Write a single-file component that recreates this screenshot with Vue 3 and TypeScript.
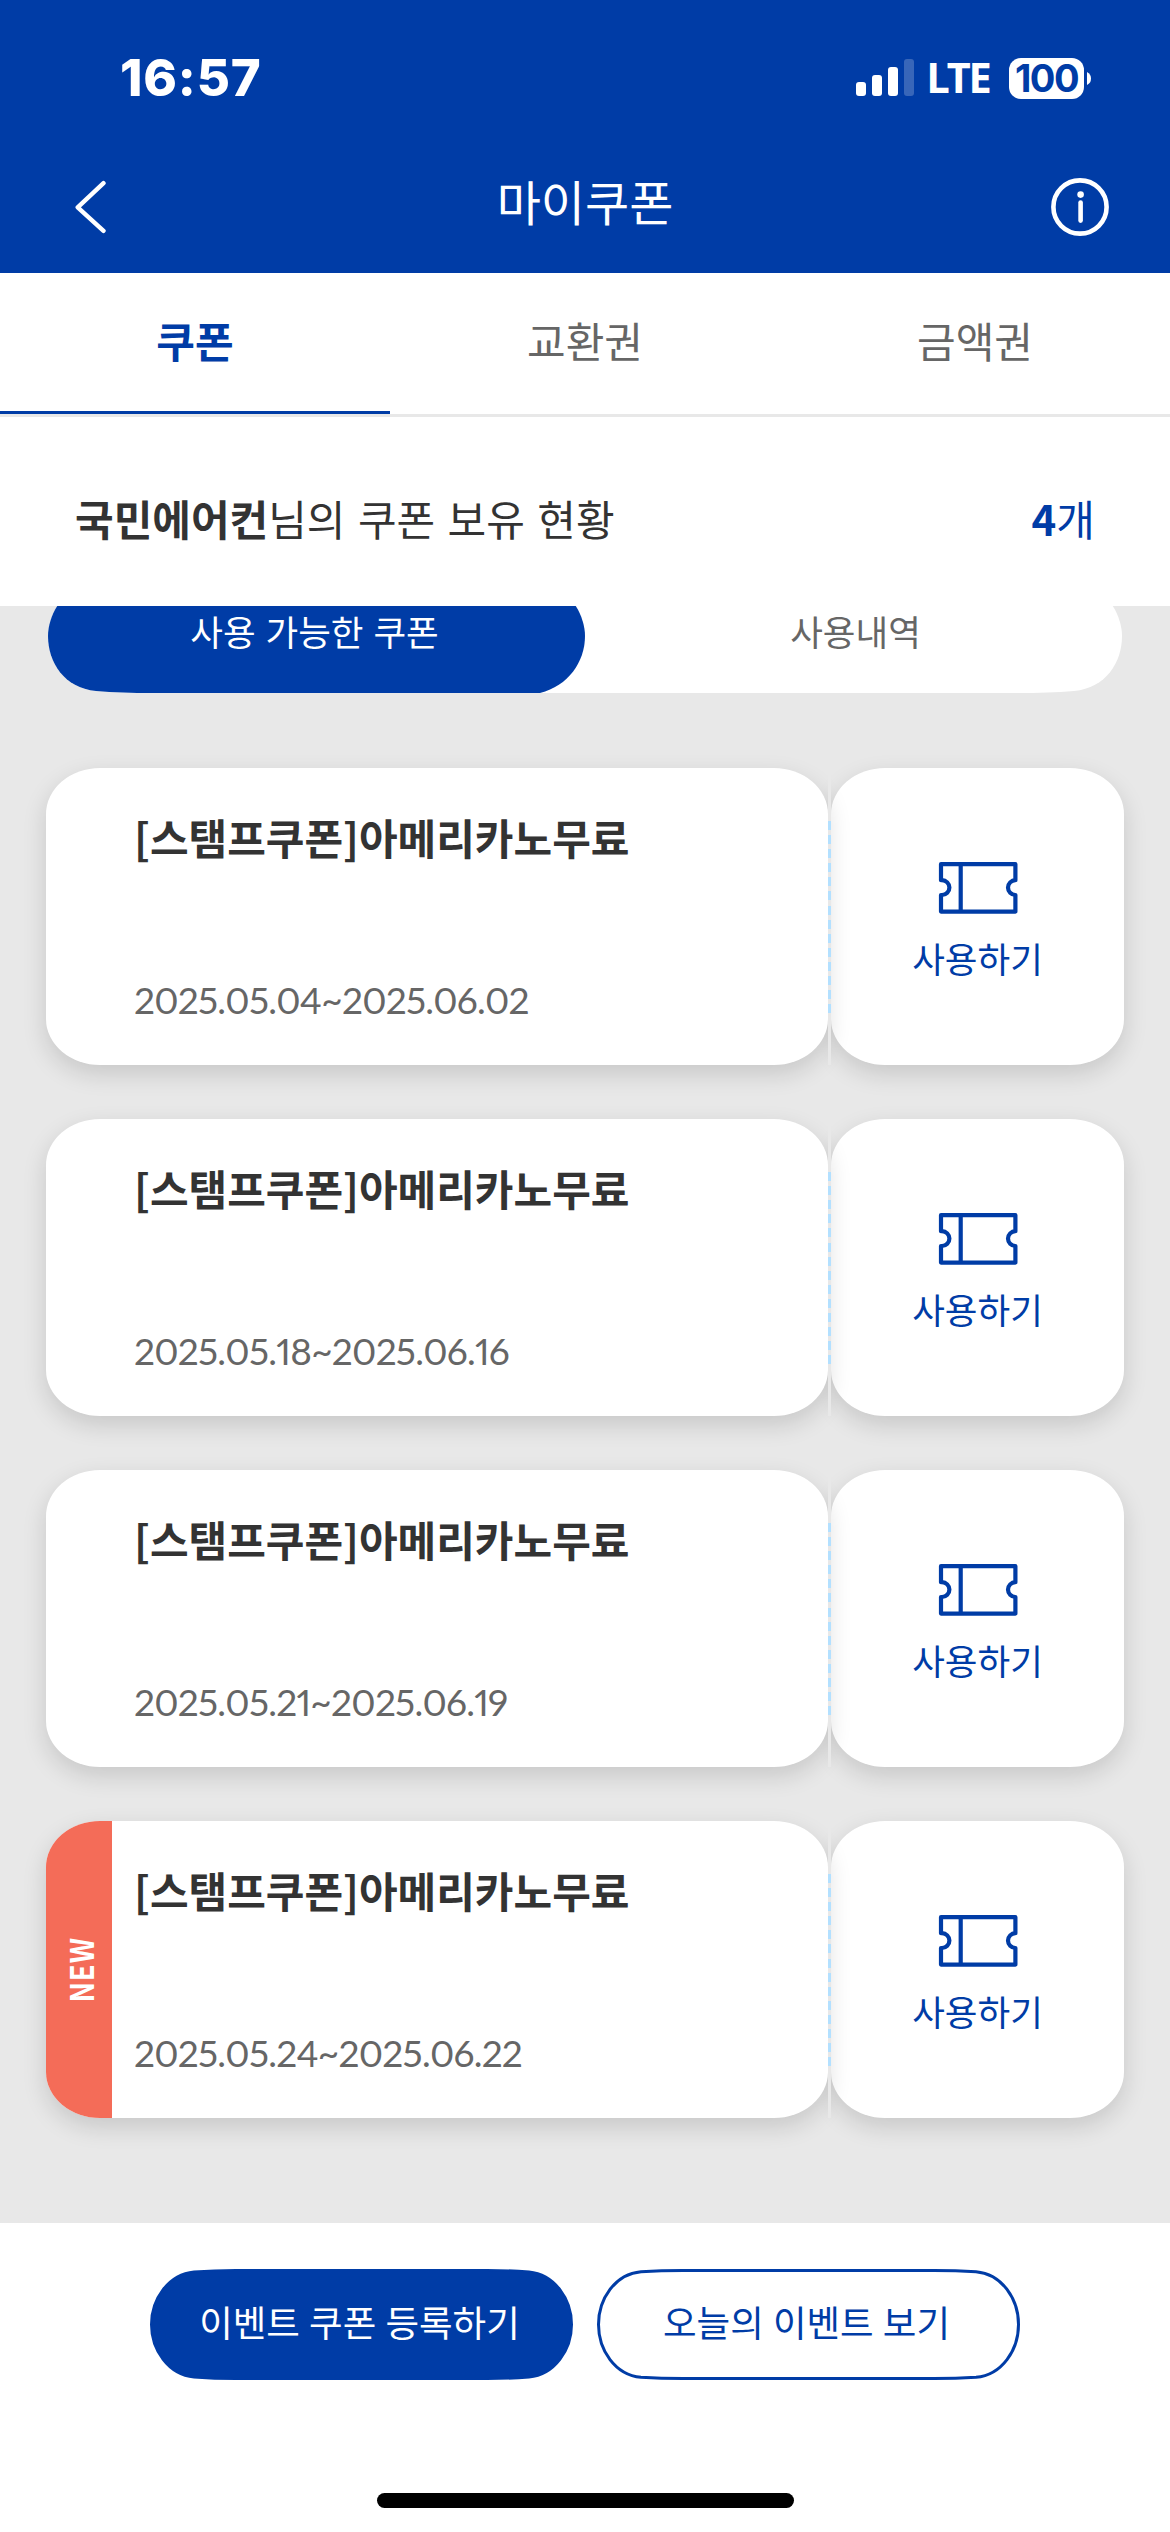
<script setup lang="ts">
interface Coupon {
  title: string
  period: string
  isNew: boolean
}

const tabs = ['쿠폰', '교환권', '금액권']
const activeTab = '쿠폰'

const coupons: Coupon[] = [
  { title: '[스탬프쿠폰]아메리카노무료', period: '2025.05.04~2025.06.02', isNew: false },
  { title: '[스탬프쿠폰]아메리카노무료', period: '2025.05.18~2025.06.16', isNew: false },
  { title: '[스탬프쿠폰]아메리카노무료', period: '2025.05.21~2025.06.19', isNew: false },
  { title: '[스탬프쿠폰]아메리카노무료', period: '2025.05.24~2025.06.22', isNew: true },
]
</script>

<template>
  <div class="screen">
    <header class="top">
      <div class="status">
        <span class="clock">16:57</span>
        <div class="status-right">
          <svg class="signal" width="58" height="38" viewBox="0 0 58 38" fill="#fff">
            <rect x="0" y="23" width="10" height="14" rx="3" />
            <rect x="16" y="16" width="10" height="21" rx="3" />
            <rect x="32" y="8" width="10" height="29" rx="3" />
            <rect x="48" y="0" width="10" height="37" rx="3" opacity="0.22" />
          </svg>
          <span class="lte">LTE</span>
          <span class="battery">100</span>
          <svg class="nub" width="4" height="13" viewBox="0 0 4 13"><path d="M0 0Q4 2 4 6.5T0 13Z" fill="#fff" /></svg>
        </div>
      </div>
      <div class="nav">
        <svg class="back" width="33" height="54" viewBox="0 0 33 54" fill="none" stroke="#fff" stroke-width="4.4" stroke-linecap="round" stroke-linejoin="round">
          <path d="M28.5 3.2L2.7 27.3L28.5 50.8" />
        </svg>
        <h1>마이쿠폰</h1>
        <svg class="info" width="58" height="58" viewBox="0 0 58 58" fill="none">
          <circle cx="29" cy="29" r="26.6" stroke="#fff" stroke-width="4.6" />
          <circle cx="29.6" cy="16.6" r="3.3" fill="#fff" />
          <path d="M29.6 24.6V42.6" stroke="#fff" stroke-width="4.6" stroke-linecap="round" />
        </svg>
      </div>
    </header>

    <nav class="tabs">
      <div v-for="tab in tabs" :key="tab" class="tab" :class="{ active: tab === activeTab }"><span>{{ tab }}</span></div>
    </nav>

    <section class="summary">
      <p><b>국민에어컨</b>님의 쿠폰 보유 현황</p>
      <p class="count"><b>4</b>개</p>
    </section>

    <main class="content">
      <div class="switch">
        <svg class="switch-bg" width="1074" height="114" viewBox="0 0 1074 114">
          <path fill="#fff" d="M0 57C0 33 20 3 50 0H1024C1054 3 1074 33 1074 57C1074 83 1058 109 1026 112Q1000 114 970 114H104Q74 114 48 112C16 109 0 83 0 57Z" />
          <path fill="#003ca6" d="M0 57C0 33 20 3 50 0H487C517 3 537 33 537 57C537 83 520 107 492 114H104Q74 114 48 112C16 109 0 83 0 57Z" />
        </svg>
        <span class="on">사용 가능한 쿠폰</span>
        <span>사용내역</span>
      </div>

      <div class="list">
        <article v-for="coupon in coupons" :key="coupon.period" class="coupon">
          <div class="detail">
            <div v-if="coupon.isNew" class="new"><span>NEW</span></div>
            <h2>{{ coupon.title }}</h2>
            <p>{{ coupon.period }}</p>
          </div>
          <div class="divider"></div>
          <div class="use">
            <svg width="80" height="54" viewBox="0 0 80 54" fill="none" stroke="#003ca6" stroke-width="4.2" stroke-linejoin="round">
              <path d="M3 2.2H77.4V18.2A7.4 7.4 0 0 0 77.4 33V49.6H3V33H4A7.4 7.4 0 0 0 4 18.2H3Z" />
              <path d="M22.7 2.2V49.6" />
            </svg>
            <span>사용하기</span>
          </div>
        </article>
      </div>
    </main>

    <footer class="bottom">
      <div class="buttons">
        <div class="button filled">
          <svg width="423" height="111" viewBox="0 0 423 111">
            <path d="M1 55.5C1 30 18 5 44 2.5Q64 1 86 1H337Q359 1 379 2.5C405 5 422 30 422 55.5C422 81 405 106 379 108.5Q359 110 337 110H86Q64 110 44 108.5C18 106 1 81 1 55.5Z" />
          </svg>
          <span>이벤트 쿠폰 등록하기</span>
        </div>
        <div class="button">
          <svg width="423" height="111" viewBox="0 0 423 111">
            <path d="M1.5 55.5C1.5 30 18 5 44 2.7Q64 1.5 86 1.5H337Q359 1.5 379 2.7C405 5 421.5 30 421.5 55.5C421.5 81 405 106 379 108.3Q359 109.5 337 109.5H86Q64 109.5 44 108.3C18 106 1.5 81 1.5 55.5Z" />
          </svg>
          <span>오늘의 이벤트 보기</span>
        </div>
      </div>
      <div class="home"></div>
    </footer>
  </div>
</template>

<style>
body {
  margin: 0;
}
</style>

<style scoped>
.screen {
  width: 1170px;
  height: 2532px;
  display: flex;
  flex-direction: column;
  overflow: hidden;
  background: #fff;
  color: #333;
  font-family: "Noto Sans CJK KR", sans-serif;
  font-weight: 400;
}
h1, h2, p {
  margin: 0;
  font-weight: inherit;
}
.top {
  height: 273px;
  flex: none;
  background: #003ca6;
  color: #fff;
}
.status {
  height: 156px;
  display: flex;
  align-items: center;
  justify-content: space-between;
  padding: 0 79px 0 120px;
}
.clock {
  font: 800 51px/60px Inter, sans-serif;
  letter-spacing: 0.8px;
}
.status-right {
  display: flex;
  align-items: center;
}
.lte {
  margin: -2px 0 0 13px;
  font: 700 41.5px/41px "Noto Sans", sans-serif;
  letter-spacing: -2.2px;
}
.battery {
  width: 75px;
  height: 41px;
  margin-left: 19.5px;
  border-radius: 12px;
  background: #fff;
  color: #003ca6;
  text-align: center;
  font: 700 38px/41px Inter, sans-serif;
  letter-spacing: -1.5px;
}
.nub {
  margin-left: 3px;
}
.nav {
  height: 101px;
  display: grid;
  grid-template-columns: 1fr auto 1fr;
  align-items: center;
  padding: 0 61px;
}
.back {
  margin-left: 14px;
}
.info {
  justify-self: end;
}
.nav h1 {
  padding-bottom: 13px;
  font-size: 48px;
  line-height: 60px;
}
.tabs {
  height: 141px;
  flex: none;
  display: flex;
  border-bottom: 3px solid #e8e8e8;
}
.tab {
  flex: 1;
  text-align: center;
  font-size: 42px;
  line-height: 133px;
  color: #666;
}
.tab.active {
  border-bottom: 3px solid #003ca6;
  color: #003ca6;
  font-weight: 700;
}
.summary {
  height: 189px;
  flex: none;
  box-sizing: border-box;
  padding: 70px 75px 0;
  display: flex;
  justify-content: space-between;
  font-size: 42px;
  line-height: 62px;
  word-spacing: 3px;
}
.summary b {
  font-weight: 700;
}
.summary .count {
  color: #003ca6;
}
.content {
  height: 1617px;
  flex: none;
  overflow: hidden;
  background: #e8e8e8;
}
.switch {
  position: relative;
  display: flex;
  width: 1074px;
  height: 114px;
  margin: -27px auto 0;
}
.switch-bg {
  position: absolute;
  inset: 0;
}
.switch span {
  position: relative;
  flex: 1;
  text-align: center;
  font-size: 35.5px;
  line-height: 104px;
  word-spacing: 2px;
  color: #666;
}
.switch .on {
  box-sizing: border-box;
  padding-right: 8px;
  color: #fff;
}
.list {
  display: flex;
  flex-direction: column;
  gap: 54px;
  padding: 75px 46px 0;
}
.coupon {
  display: flex;
  height: 297px;
}
.detail,
.use {
  background: #fff;
  border-radius: 54px / 46px;
  box-shadow: 0 9px 24px rgba(0, 0, 0, 0.14);
}
.detail {
  position: relative;
  width: 782px;
  overflow: hidden;
  box-sizing: border-box;
  padding: 38px 0 0 88px;
}
.detail h2 {
  font-size: 42px;
  line-height: 62px;
  font-weight: 700;
}
.detail p {
  margin-top: 106px;
  font-family: Lato, "Noto Sans CJK KR", sans-serif;
  font-variant-numeric: lining-nums proportional-nums;
  font-kerning: none;
  font-size: 37px;
  line-height: 52px;
  letter-spacing: -0.75px;
  color: #666;
}
.new {
  position: absolute;
  left: 0;
  top: 0;
  bottom: 0;
  width: 66px;
  display: flex;
  align-items: center;
  justify-content: center;
  background: #f46c58;
}
.new span {
  writing-mode: vertical-rl;
  transform: rotate(180deg) scaleY(0.86);
  margin-left: 2px;
  color: #fff;
  font-size: 32px;
  font-weight: 700;
  letter-spacing: 1px;
}
.divider {
  position: relative;
  z-index: 1;
  width: 3px;
  background: repeating-linear-gradient(#b3e0ff 0 9px, #e8e8e8 9px 14.1px) 0 53px / 3px 193px no-repeat #e8e8e8;
}
.use {
  width: 293px;
  display: flex;
  flex-direction: column;
  align-items: center;
  box-sizing: border-box;
  padding-top: 94px;
  color: #003ca6;
}
.use span {
  margin-top: 16px;
  font-size: 35.5px;
  line-height: 52px;
}
.bottom {
  flex: 1;
  display: flex;
  flex-direction: column;
  align-items: center;
  padding-top: 46px;
}
.buttons {
  display: flex;
  gap: 24px;
}
.button {
  position: relative;
  box-sizing: border-box;
  width: 423px;
  height: 111px;
  padding-right: 4px;
  text-align: center;
  font-size: 36.5px;
  line-height: 106px;
  word-spacing: 1px;
  color: #003ca6;
}
.button svg {
  position: absolute;
  inset: 0;
  fill: #fff;
  stroke: #003ca6;
  stroke-width: 3px;
}
.button.filled {
  color: #fff;
}
.button.filled svg {
  fill: #003ca6;
  stroke-width: 2px;
}
.button span {
  position: relative;
}
.home {
  width: 417px;
  height: 15px;
  margin-top: 113px;
  border-radius: 8px;
  background: #000;
}
</style>
